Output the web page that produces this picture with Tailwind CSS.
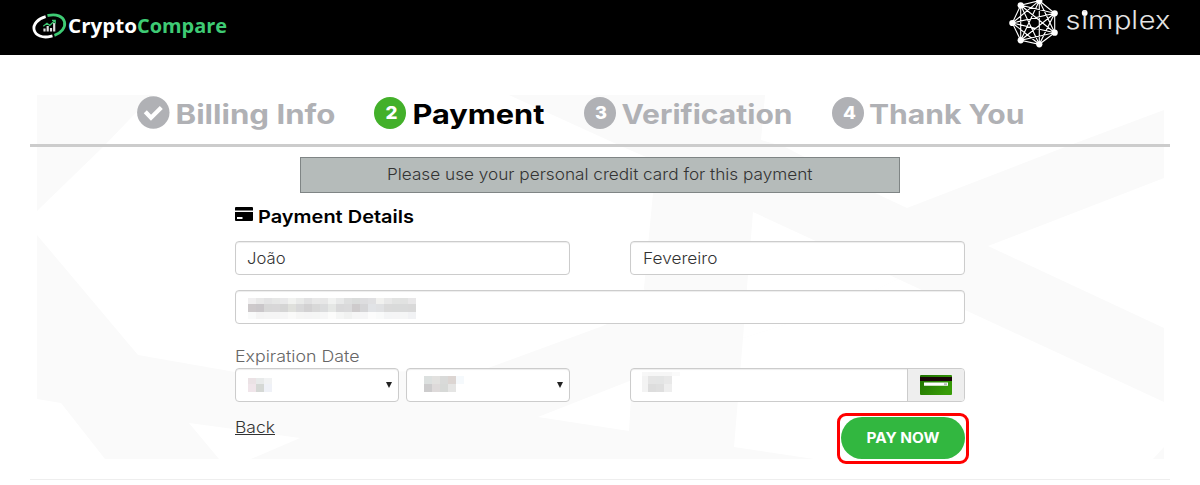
<!DOCTYPE html>
<html lang="en"><head><meta charset="utf-8"><title>Payment</title>
<script src="https://cdn.jsdelivr.net/npm/@tailwindcss/browser@4"></script></head>
<body class="bg-white font-['Inter',sans-serif] text-[#333] h-[485px] overflow-hidden">
<header class="bg-black h-[55px] flex justify-between overflow-hidden">
  <svg class="w-[240px] h-[55px] shrink-0" viewBox="0 0 240 55" fill="none">
    <g transform="rotate(-14 49 26)" stroke-width="2.800"><path d="M48 16.200C40 16.200 33.600 20.600 33.600 26.300S40 36.400 48 36.400H50" stroke="#fff"/><path d="M50 15.600H51C59 15.600 65 20 65 25.800S59 36 52 36.400" stroke="#3ecb74"/></g>
    <path d="M44.500 31.500v-3M47.700 31.500v-5.500M51 31.500v-3.500M54.200 31.500v-8.500" stroke="#ddd" stroke-width="2.200"/>
    <path d="M43.300 26.300l3.700-3 2.700 2.200 5-4.800M52 20.300h3.200v3.200" stroke="#3ecb74" stroke-width="1.300"/>
    <g class="font-['Open_Sans',sans-serif] font-bold text-[19.500px]"><text x="68" y="33" textLength="69" lengthAdjust="spacingAndGlyphs" fill="#fff">Crypto</text><text x="137" y="33" textLength="90" lengthAdjust="spacingAndGlyphs" fill="#3ecb74">Compare</text></g>
  </svg>
  <svg class="w-[195px] h-[55px] shrink-0" viewBox="0 0 195 55">
    <path d="M34.300.7L49.700 13.300V32.700L34.300 44.300 15.700 40.300 7.300 23 15.700 5.300ZM34.300.7L49.700 32.700 15.700 40.300V5.300L49.700 13.300 34.300 44.300 7.300 23ZM34.300.7V44.300L15.700 5.300 49.700 32.700 7.300 23 49.700 13.300 15.700 40.300Z" fill="none" stroke="#fff" stroke-width="1.100"/>
    <g fill="#fff"><circle cx="34.300" cy=".7" r="3.100"/><circle cx="49.700" cy="13.300" r="3.100"/><circle cx="49.700" cy="32.700" r="3.100"/><circle cx="34.300" cy="44.300" r="3.100"/><circle cx="15.700" cy="40.300" r="3.100"/><circle cx="7.300" cy="23" r="3.100"/><circle cx="15.700" cy="5.300" r="3.100"/><circle cx="79.700" cy="13" r="2.900"/></g>
    <text transform="scale(1.160 1)" x="52.200 65.700 71.500 94 108.900 115.300 129.300" y="29.500" fill="#e4e4e4" class="font-light text-[25px]">simplex</text>
  </svg>
</header>
<main class="relative mx-[30px] h-[425px] pt-[40px] border-b border-[#eee]">
  <svg class="absolute left-[7px] top-[40px] w-[1127px] h-[364px] -z-10" viewBox="37 95 1127 364">
    <path fill="#fafafa" d="M37 95H153L103 147 37 211ZM37 235L138 355 235 372 480 371 600 327 648 307 644 288 653 193V160L623 147 509 95H765L761 140 785 147 875 193 907 208 1065 147 1164 110V178L988 246 1164 328V402L965 310 898 279 875 290 787 324 743 338 734 447 814 459H251L300 438 189 423 219 459H105L61 403 37 399ZM1164 447V459H1153Z"/>
    <path fill="#fff" d="M538 417L632 380 629 431ZM753 212L898 279 875 290 787 324 743 338Z"/>
  </svg>
  <div class="relative -mt-px h-[53px] pt-px border-b-[3px] border-[#ccc] flex font-bold text-[26.500px]">
    <svg class="w-[1140px] h-[49px] shrink-0" viewBox="30 95 1140 49">
      <g fill="#b0b1b5"><circle cx="153.300" cy="112.500" r="16.200"/><circle cx="600" cy="113" r="16"/><circle cx="848" cy="113" r="16"/></g>
      <circle cx="390" cy="113" r="16" fill="#43b02a"/>
      <path d="M145.300 111.800l5.700 6 10.300-10.300" fill="none" stroke="#fff" stroke-width="4.200"/>
      <g fill="#fff" class="text-[17.500px] font-extrabold"><text x="385.500" y="119" textLength="12" lengthAdjust="spacingAndGlyphs">2</text><text x="595" y="119" textLength="12" lengthAdjust="spacingAndGlyphs">3</text><text x="843" y="119" textLength="13" lengthAdjust="spacingAndGlyphs">4</text></g>
      <g fill="#b0b1b5"><text x="175.500" y="124" textLength="160" lengthAdjust="spacingAndGlyphs">Billing Info</text><text x="412.500" y="124" textLength="132" lengthAdjust="spacingAndGlyphs" fill="#000">Payment</text><text x="621.500" y="124" textLength="171" lengthAdjust="spacingAndGlyphs">Verification</text><text x="869" y="124" textLength="155.500" lengthAdjust="spacingAndGlyphs">Thank You</text></g>
    </svg>
  </div>
  <div class="mx-auto mt-[10px] w-[600px] h-[36px] bg-[#b5bbba] border border-[#7f8585]">
    <svg class="w-full h-full" viewBox="301 158 598 34"><text x="387" y="180" textLength="425.500" lengthAdjust="spacingAndGlyphs" fill="#333" class="font-light text-[16.500px]">Please use your personal credit card for this payment</text></svg>
  </div>
  <section class="mx-auto w-[730px]">
    <svg class="block w-[200px] h-[48px]" viewBox="235 193 200 48"><path d="M236 207h16a1 1 0 0 1 1 1v2.500h-18V208a1 1 0 0 1 1-1ZM235 212h18v8a1 1 0 0 1-1 1h-16a1 1 0 0 1-1-1ZM237 217v2h5.500V217Z" fill-rule="evenodd"/><text x="258" y="222.500" textLength="156" lengthAdjust="spacingAndGlyphs" class="font-semibold text-[17.500px]">Payment Details</text></svg>
    <div class="flex justify-between">
      <div class="w-[335px] h-[34px] bg-white border border-[#ccc] rounded shadow-[inset_0_1px_1px_rgba(0,0,0,0.075)]"><svg class="w-[120px] h-[32px]" viewBox="236 242 120 32"><text x="247" y="264" textLength="38.500" lengthAdjust="spacingAndGlyphs" fill="#333" class="font-light text-[16.500px]">João</text></svg></div>
      <div class="w-[335px] h-[34px] bg-white border border-[#ccc] rounded shadow-[inset_0_1px_1px_rgba(0,0,0,0.075)]"><svg class="w-[120px] h-[32px]" viewBox="631 242 120 32"><text x="643" y="264" textLength="74.500" lengthAdjust="spacingAndGlyphs" fill="#333" class="font-light text-[16.500px]">Fevereiro</text></svg></div>
    </div>
    <div class="mt-[15px] h-[34px] bg-white border border-[#ccc] rounded shadow-[inset_0_1px_1px_rgba(0,0,0,0.075)] pl-[12px] pt-[7px]">
      <svg class="w-[168px] h-[21px]" shape-rendering="crispEdges" data-cells="f0eff0 e8e8e8 e3e3e4 e6e7e6 e9e9ea f1f2f0 e9eae9 e1e1e2 e8e8e8 e7e7e7 f1f2f1 e8e9e9 dedfdf dadcdb dddddf e0e0e2 f1f1ef e8e8e8 e2e3e2 e1e2e1 e8e7e8|cdc9cb cac7ca d7d7d7 d8d7d8 d5d5d5 dfe0dc d8d8d9 d2d1d2 d8d8d8 dbdcdd e5e7e5 d9d9da dadadb cecbcc d5d5d7 e1e3e6 e0e1e3 dadada d9dada d9dada d9d9d9|f9fafa f4f4f4 f5f5f5 f5f5f5 f6f6f6 fafaf9 f6f6f5 f5f5f5 f5f6f5 f7f7f7 fcfcfb f5f6f5 f1f2f1 f6f6f6 f6f6f7 fcfcfc f9fafa f4f5f6 f5f5f6 f5f6f6 f1f2f4" data-rows="6 8 7"></svg>
    </div>
    <svg class="block w-[200px] h-[44px]" viewBox="235 324 200 44"><text x="235" y="362" textLength="124.500" lengthAdjust="spacingAndGlyphs" fill="#666" class="font-light text-[16.500px]">Expiration Date</text></svg>
    <div class="flex">
      <div class="w-[164px] h-[34px] bg-white border border-[#ccc] rounded shadow-[inset_0_1px_1px_rgba(0,0,0,0.075)] pl-[12px] pr-[6px] pt-[9px] flex justify-between">
        <svg class="w-[24px] h-[14px]" shape-rendering="crispEdges" data-cells="ebe2e5 e8eaea f1f2f3|f0e5ea d5d8d5 eff1f7" data-rows="6 8"></svg>
        <svg class="w-[6px] h-[6px] mt-[4px]" viewBox="0 0 6 6"><path d="M0 0h6L3 6z" fill="#222"/></svg>
      </div>
      <div class="ml-[7px] w-[164px] h-[34px] bg-white border border-[#ccc] rounded shadow-[inset_0_1px_1px_rgba(0,0,0,0.075)] pl-[17px] pr-[6px] pt-[7px] flex justify-between">
        <svg class="w-[40px] h-[16px]" shape-rendering="crispEdges" data-cells="dce0df e2e1df d9dad9 dcd5d2 f5f9fc|cdcccd dedada d7d9d7 e5e5e4 ffffff" data-rows="8 8"></svg>
        <svg class="w-[6px] h-[6px] mt-[6px]" viewBox="0 0 6 6"><path d="M0 0h6L3 6z" fill="#222"/></svg>
      </div>
      <div class="ml-[60px] w-[335px] h-[34px] bg-white border border-[#ccc] rounded overflow-hidden shadow-[inset_0_1px_1px_rgba(0,0,0,0.075)] flex justify-between">
        <svg class="w-[40px] h-[24px] ml-[11px] mt-[3px]" shape-rendering="crispEdges" data-cells="f7f7f7 f6f6f6 f6f6f6 f6f6f6 fafafa|f3f3f3 e5e5e5 e4e5e5 e8e8e8 ffffff|f3f3f3 dddddd dfdfdf eeeeee ffffff" data-rows="4 8 8" data-cols="6 8 8 8 8"></svg>
        <div class="w-[57px] bg-[#eee] border-l border-[#ccc] pl-[12px] pt-[6px]">
          <svg class="w-[32px] h-[20px]" viewBox="0 0 32 20"><defs><linearGradient id="g" x1="0" y1="0" x2="1" y2=".6"><stop offset="0" stop-color="#1f7000"/><stop offset="1" stop-color="#389c08"/></linearGradient></defs><rect width="32" height="20" rx="1" fill="url(#g)"/><path d="M0 2h32v4H0z" fill="#190608"/><path d="M4 7.500h24v3.300H4z" fill="#fff"/><path d="M24 8.200h3v2h-3z" fill="#bbb"/></svg>
        </div>
      </div>
    </div>
    <div class="mt-[11px] flex justify-between">
      <a class="block"><svg class="w-[60px] h-[30px]" viewBox="235 413 60 30"><text x="235" y="433" textLength="40" lengthAdjust="spacingAndGlyphs" fill="#333" class="font-light text-[16.500px]">Back</text><path d="M235 434h40v1h-40z" fill="#333"/></svg></a>
      <div class="-mr-[4px] w-[132px] h-[51px] border-[3px] border-[#f00] rounded-[9px] pl-px pt-px">
        <button class="block w-[124px] h-[42px] bg-[#32b740] rounded-[21px]"><svg class="w-full h-full" viewBox="841 417 124 42"><text x="866.500" y="443" textLength="73" lengthAdjust="spacingAndGlyphs" fill="#fff" class="font-bold text-[14px]">PAY NOW</text></svg></button>
      </div>
    </div>
  </section>
</main>
<script>
// Draw the redacted values as grids of coloured cells
document.querySelectorAll('[data-cells]').forEach(svg => {
  const heights = svg.dataset.rows.split(' ').map(Number), widths = (svg.dataset.cols || '').split(' ').map(Number);
  let y = 0;
  svg.innerHTML = svg.dataset.cells.split('|').map((row, r) => {
    let x = 0;
    const out = row.split(' ').map((c, i) => { const w = widths[i] || 8, s = `<rect x="${x}" y="${y}" width="${w}" height="${heights[r]}" fill="#${c}"/>`; x += w; return s; }).join('');
    y += heights[r];
    return out;
  }).join('');
});
</script>
</body></html>
